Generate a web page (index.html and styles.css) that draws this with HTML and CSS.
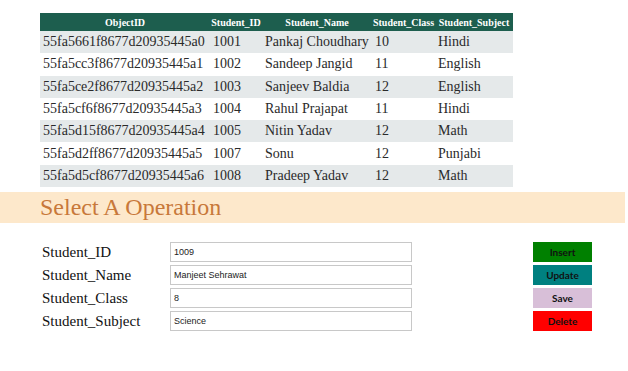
FILE: index.html
```html
<!DOCTYPE html>
<html lang="en">
<head>
  <meta charset="UTF-8" />
  <title>Student Records</title>
  <link rel="stylesheet" href="styles.css">
</head>
<body>

  <!-- Records Table -->
  <table class="records">
    <thead>
      <tr>
        <th class="c-oid">ObjectID</th>
        <th class="c-id">Student_ID</th>
        <th class="c-name">Student_Name</th>
        <th class="c-class">Student_Class</th>
        <th class="c-subj">Student_Subject</th>
      </tr>
    </thead>
    <tbody>
      <tr><td>55fa5661f8677d20935445a0</td><td>1001</td><td>Pankaj Choudhary</td><td>10</td><td>Hindi</td></tr>
      <tr><td>55fa5cc3f8677d20935445a1</td><td>1002</td><td>Sandeep Jangid</td><td>11</td><td>English</td></tr>
      <tr><td>55fa5ce2f8677d20935445a2</td><td>1003</td><td>Sanjeev Baldia</td><td>12</td><td>English</td></tr>
      <tr><td>55fa5cf6f8677d20935445a3</td><td>1004</td><td>Rahul Prajapat</td><td>11</td><td>Hindi</td></tr>
      <tr><td>55fa5d15f8677d20935445a4</td><td>1005</td><td>Nitin Yadav</td><td>12</td><td>Math</td></tr>
      <tr><td>55fa5d2ff8677d20935445a5</td><td>1007</td><td>Sonu</td><td>12</td><td>Punjabi</td></tr>
      <tr><td>55fa5d5cf8677d20935445a6</td><td>1008</td><td>Pradeep Yadav</td><td>12</td><td>Math</td></tr>
    </tbody>
  </table>

  <!-- Operation Heading -->
  <div class="band">
    <h2>Select A Operation</h2>
  </div>

  <!-- Form -->
  <div class="form">
    <div class="fields">
      <div class="row">
        <label>Student_ID</label>
        <input type="text" value="1009">
      </div>
      <div class="row">
        <label>Student_Name</label>
        <input type="text" value="Manjeet Sehrawat">
      </div>
      <div class="row">
        <label>Student_Class</label>
        <input type="text" value="8">
      </div>
      <div class="row">
        <label>Student_Subject</label>
        <input type="text" value="Science">
      </div>
    </div>

    <div class="actions">
      <button class="btn insert">Insert</button>
      <button class="btn update">Update</button>
      <button class="btn save">Save</button>
      <button class="btn delete">Delete</button>
    </div>
  </div>

</body>
</html>
```

FILE: styles.css
```css
/* Basic reset */
* {
  margin: 0;
  padding: 0;
  box-sizing: border-box;
}

body {
  font-family: 'Liberation Serif', 'Times New Roman', serif;
  background: #fff;
  color: #222;
}

/* Records table */
.records {
  margin: 13px 0 0 40px;
  width: 473px;
  border-collapse: collapse;
}

.records th {
  background: #1d5e4e;
  color: #fff;
  font-size: 10px;
  font-weight: bold;
  height: 18px;
  text-align: center;
  padding: 0;
}

.records td {
  font-size: 14px;
  height: 22.3px;
  padding: 0 0 0 3px;
  color: #2a2a2a;
  white-space: nowrap;
}

.records tbody tr:nth-child(odd) {
  background: #e5e9ea;
}

.c-oid { width: 170px; }
.c-id { width: 52px; }
.c-name { width: 110px; }
.c-class { width: 63px; }
.c-subj { width: 78px; }

/* Heading band */
.band {
  margin-top: 5px;
  width: 625px;
  height: 31px;
  background: #fde8cb;
  display: flex;
  align-items: center;
  padding-left: 40px;
}

.band h2 {
  font-family: 'Liberation Serif', 'Times New Roman', serif;
  font-size: 24px;
  font-weight: normal;
  color: #c8783a;
}

/* Form */
.form {
  display: flex;
  margin-top: 19px;
  padding-left: 42px;
}

.fields {
  display: flex;
  flex-direction: column;
  gap: 3px;
}

.row {
  display: flex;
  align-items: center;
  height: 20px;
}

.row label {
  width: 128px;
  font-size: 15px;
  color: #111;
}

.row input {
  width: 242px;
  height: 20px;
  border: 1px solid #c8c8c8;
  font-family: 'Liberation Sans', Arial, sans-serif;
  font-size: 9px;
  padding-left: 3px;
  color: #222;
  outline: none;
}

.actions {
  display: flex;
  flex-direction: column;
  gap: 3px;
  margin-left: 121px;
}

.btn {
  width: 59px;
  height: 20px;
  border: none;
  font-family: Lato, 'Liberation Sans', sans-serif;
  font-size: 10px;
  font-weight: bold;
  color: #111;
  cursor: pointer;
}

.insert { background: #008000; }
.update { background: #008080; }
.save { background: #d8bfd8; }
.delete { background: #ff0000; }
```
